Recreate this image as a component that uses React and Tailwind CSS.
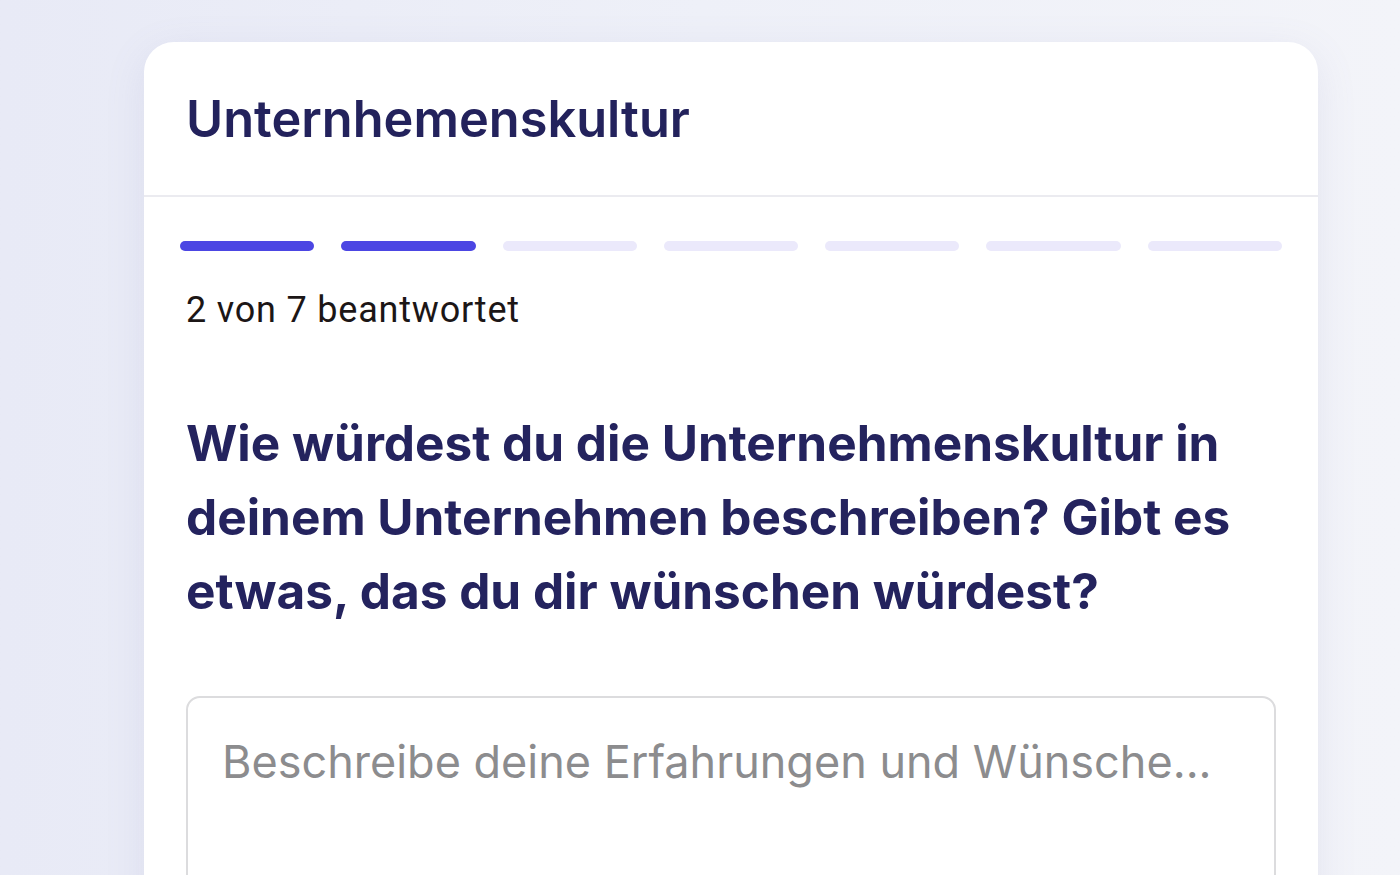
import React from "react";

export default function App() {
  const total = 7;
  const answered = 2;
  return (
    <div className="w-[1400px] h-[875px] overflow-hidden bg-gradient-to-r from-[#e8eaf6] via-[#eef0f8] to-[#f3f4f9] pl-[144px] pt-[42px]">
      <div className="w-[1174px] h-[900px] bg-white rounded-t-[30px] shadow-[0_10px_40px_rgba(120,125,180,0.12)]">
        <div className="h-[155px] flex items-center px-[42px] border-b-2 border-[#ebebf0]">
          <h1 className="text-[50.5px] font-semibold text-[#23225c]" style={{ fontFamily: "Inter, 'Noto Sans', sans-serif" }}>
            Unternhemenskultur
          </h1>
        </div>
        <div className="pt-[44px] px-[36px] flex gap-[27px]">
          {Array.from({ length: total }).map((_, i) => (
            <div
              key={i}
              className={i < answered ? "flex-1 h-[10px] rounded-full bg-[#4c46e3]" : "flex-1 h-[10px] rounded-full bg-[#ebe9fb]"}
            />
          ))}
        </div>
        <div className="px-[42px]">
          <p className="mt-[39px] text-[36px] leading-[40px] tracking-[0.8px] text-[#1c1616]" style={{ fontFamily: "Roboto, sans-serif" }}>
            2 von 7 beantwortet
          </p>
          <h2 className="mt-[76px] text-[49.5px] leading-[74px] font-bold text-[#24235e]" style={{ fontFamily: "Inter, 'Noto Sans', sans-serif" }}>
            Wie würdest du die Unternehmenskultur in deinem Unternehmen beschreiben? Gibt es etwas, das du dir wünschen würdest?
          </h2>
          <div className="mt-[68px] h-[260px] border-2 border-[#dcdcde] rounded-[14px] px-[34px] pt-[36px]">
            <span className="text-[45px] leading-[56px] text-[#8c8c8e]" style={{ fontFamily: "Inter, 'Noto Sans', sans-serif" }}>
              Beschreibe deine Erfahrungen und Wünsche...
            </span>
          </div>
        </div>
      </div>
    </div>
  );
}
